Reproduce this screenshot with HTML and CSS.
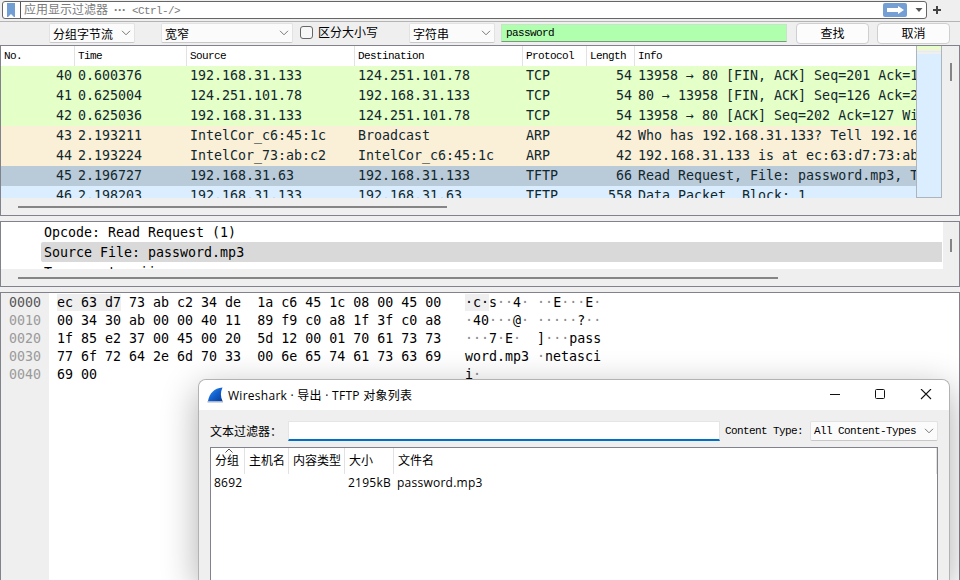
FILE: index.html
```html
<!DOCTYPE html>
<html lang="zh-CN">
<head>
    <meta charset="UTF-8">
    <title>Wireshark</title>
    <link rel="stylesheet" href="styles.css">
</head>
<body>

<div class="filter-bar">
    <div class="filter-box">
        <svg class="bookmark" width="10" height="16" viewBox="0 0 10 16"><path d="M1 1h8v14H8L5 12 2 15H1z" fill="#729fd3"/></svg>
        <div class="filter-text">应用显示过滤器<span class="dots">···</span><span class="mono">&lt;Ctrl-/&gt;</span></div>
        <svg class="apply" width="24" height="14" viewBox="0 0 24 14"><rect width="24" height="14" rx="2" fill="#739fd4"/><path d="M4 5h11V3l6 4-6 4V9H4z" fill="#fff"/></svg>
        <svg class="caret" width="8" height="4" viewBox="0 0 8 4"><path d="M0.500 0h7L4 4z" fill="#555"/></svg>
    </div>
    <svg class="plus" width="8" height="8" viewBox="0 0 8 8"><path d="M4 0v8M0 4h8" stroke="#444" stroke-width="2"/></svg>
</div>

<div class="search-bar">
    <div class="select packet-bytes"><span>分组字节流</span><svg width="10" height="6" viewBox="0 0 10 6"><path d="M1 0.800l4 4 4-4"/></svg></div>
    <div class="select charset"><span>宽窄</span><svg width="10" height="6" viewBox="0 0 10 6"><path d="M1 0.800l4 4 4-4"/></svg></div>
    <div class="checkbox"></div>
    <div class="case-label">区分大小写</div>
    <div class="select kind"><span>字符串</span><svg width="10" height="6" viewBox="0 0 10 6"><path d="M1 0.800l4 4 4-4"/></svg></div>
    <div class="search-input mono">password</div>
    <div class="button">查找</div>
    <div class="button">取消</div>
</div>

<div class="pane packet-pane">
    <div class="packets">
        <div class="packet head"><div>No.</div><div>Time</div><div>Source</div><div>Destination</div><div>Protocol</div><div>Length</div><div>Info</div></div>
        <div class="packet tcp"><div>40</div><div>0.600376</div><div>192.168.31.133</div><div>124.251.101.78</div><div>TCP</div><div>54</div><div>13958 → 80 [FIN, ACK] Seq=201 Ack=1</div></div>
        <div class="packet tcp"><div>41</div><div>0.625004</div><div>124.251.101.78</div><div>192.168.31.133</div><div>TCP</div><div>54</div><div>80 → 13958 [FIN, ACK] Seq=126 Ack=2</div></div>
        <div class="packet tcp"><div>42</div><div>0.625036</div><div>192.168.31.133</div><div>124.251.101.78</div><div>TCP</div><div>54</div><div>13958 → 80 [ACK] Seq=202 Ack=127 Wi</div></div>
        <div class="packet arp"><div>43</div><div>2.193211</div><div>IntelCor_c6:45:1c</div><div>Broadcast</div><div>ARP</div><div>42</div><div>Who has 192.168.31.133? Tell 192.16</div></div>
        <div class="packet arp"><div>44</div><div>2.193224</div><div>IntelCor_73:ab:c2</div><div>IntelCor_c6:45:1c</div><div>ARP</div><div>42</div><div>192.168.31.133 is at ec:63:d7:73:ab</div></div>
        <div class="packet selected"><div>45</div><div>2.196727</div><div>192.168.31.63</div><div>192.168.31.133</div><div>TFTP</div><div>66</div><div>Read Request, File: password.mp3, T</div></div>
        <div class="packet udp"><div>46</div><div>2.198203</div><div>192.168.31.133</div><div>192.168.31.63</div><div>TFTP</div><div>558</div><div>Data Packet, Block: 1</div></div>
    </div>
    <div class="minimap"></div>
    <div class="vscroll"><div class="thumb"></div></div>
    <div class="hscroll"><div class="thumb"></div></div>
</div>

<div class="pane detail-pane">
    <div class="details">
        <div class="detail">Opcode: Read Request (1)</div>
        <div class="detail current">Source File: password.mp3</div>
        <div class="detail">Type: netascii</div>
    </div>
    <div class="vscroll"><div class="thumb"></div></div>
    <div class="hscroll"><div class="thumb"></div></div>
</div>

<div class="pane hex-pane">
<pre class="offsets"><b>0000</b>
0010
0020
0030
0040</pre>
<pre class="bytes"><mark>ec 63 d7</mark> 73 ab c2 34 de  1a c6 45 1c 08 00 45 00
00 34 30 ab 00 00 40 11  89 f9 c0 a8 1f 3f c0 a8
1f 85 e2 37 00 45 00 20  5d 12 00 01 70 61 73 73
77 6f 72 64 2e 6d 70 33  00 6e 65 74 61 73 63 69
69 00</pre>
<pre class="ascii"><mark>·c·</mark>s<i>··</i>4<i>·</i> <i>··</i>E<i>···</i>E<i>·</i>
<i>·</i>40<i>···</i>@<i>·</i> <i>·····</i>?<i>··</i>
<i>···</i>7<i>·</i>E<i>·</i>  ]<i>···</i>pass
word.mp3 <i>·</i>netasci
i<i>·</i></pre>
</div>

<div class="dialog">
    <div class="titlebar">
        <svg class="fin" width="17" height="17" viewBox="0 0 17 17">
            <defs><linearGradient id="fin" x1="0" y1="0" x2="1" y2="1"><stop offset="0" stop-color="#3b9cf0"/><stop offset="0.500" stop-color="#1262d0"/><stop offset="1" stop-color="#073c99"/></linearGradient></defs>
            <path d="M1 14C2.500 6.500 7 1 15.500 0.500 13.300 5 13.500 9.500 15.500 14z" fill="url(#fin)"/>
            <path d="M0.500 14h15.500v1.500H0.500z" fill="#a9b5c6"/>
        </svg>
        <div class="title">Wireshark · 导出 · TFTP 对象列表</div>
        <svg class="controls" width="102" height="12" viewBox="0 0 102 12" fill="none" stroke="#111">
            <path d="M0 5.500h10"/>
            <rect x="45.500" y="0.500" width="9" height="9" rx="1"/>
            <path d="M91 0l10 10M101 0L91 10" stroke-width="1.100"/>
        </svg>
    </div>
    <div class="dialog-filter">
        <div class="text-label">文本过滤器：</div>
        <div class="text-input"></div>
        <div class="type-label mono">Content Type:</div>
        <div class="select types"><span class="mono">All Content-Types</span><svg width="10" height="6" viewBox="0 0 10 6"><path d="M1 0.800l4 4 4-4"/></svg></div>
    </div>
    <div class="objects">
        <svg class="sort" width="8" height="5" viewBox="0 0 8 5"><path d="M0.500 4.500L4 1l3.500 3.500" fill="none" stroke="#555"/></svg>
        <div class="object object-head"><div>分组</div><div>主机名</div><div>内容类型</div><div>大小</div><div>文件名</div></div>
        <div class="object"><div>8692</div><div></div><div></div><div>2195kB</div><div>password.mp3</div></div>
    </div>
</div>

</body>
</html>
```
FILE: styles.css
```css
* {
    box-sizing: border-box;
}
body {
    margin: 0;
    width: 960px;
    height: 580px;
    overflow: hidden;
    position: relative;
    display: flex;
    flex-direction: column;
    background: #efefef;
    color: #000;
    font-family: "Liberation Sans", "Noto Sans CJK SC", sans-serif;
    font-size: 12px;
}
svg {
    display: block;
    flex: none;
}
.mono {
    font-family: "Liberation Mono", monospace;
    font-size: 11px;
    letter-spacing: -0.6px;
}

/* display filter */
.filter-bar {
    height: 22px;
    flex: none;
    display: flex;
    align-items: flex-start;
    padding: 1px 0 0 2px;
    border-bottom: 1px solid #b4b4b4;
}
.filter-box {
    width: 925px;
    height: 18px;
    display: flex;
    align-items: center;
    background: #fff;
    border: 1px solid #666;
    border-radius: 3px;
}
.bookmark {
    margin-left: 3px;
}
.filter-text {
    flex: 1;
    height: 16px;
    line-height: 16px;
    margin-left: 4px;
    padding-left: 3px;
    border-left: 1px solid #555;
    color: #7b7b7b;
}
.filter-text .dots {
    display: inline-block;
    width: 12px;
    margin: 0 6px 0 6px;
    font-weight: bold;
}
.caret {
    margin: 0 3px 0 8px;
}
.plus {
    margin: 5px 0 0 6px;
}

/* search bar */
.search-bar {
    height: 23px;
    flex: none;
    display: flex;
    align-items: flex-start;
    padding: 1px 0 0 49px;
}
.select {
    height: 20px;
    display: flex;
    align-items: center;
    justify-content: space-between;
    padding: 0 3px 0 3px;
    background: #fbfbfb;
    border: 1px solid #e2e2e2;
    border-bottom-color: #c8c8c8;
    border-radius: 2px;
    white-space: nowrap;
}
.select svg {
    fill: none;
    stroke: #777;
}
.packet-bytes {
    width: 86px;
}
.charset {
    width: 132px;
    margin-left: 26px;
}
.checkbox {
    width: 13px;
    height: 13px;
    margin: 3px 5px 0 7px;
    background: #f7f7f7;
    border: 1px solid #666;
    border-radius: 3px;
}
.case-label {
    width: 91px;
    line-height: 21px;
}
.kind {
    width: 86px;
}
.search-input {
    width: 286px;
    height: 18px;
    line-height: 17px;
    margin: 1px 0 0 6px;
    padding-left: 4px;
    background: #afffaf;
    border: 1px solid #c5e6c5;
    border-bottom-color: #7d987d;
}
.button {
    width: 73px;
    height: 21px;
    line-height: 21px;
    margin-left: 8px;
    text-align: center;
    background: #fcfcfc;
    border: 1px solid #cfcfcf;
    border-radius: 4px;
}
.search-input + .button {
    margin-left: 9px;
}

/* panes */
.pane {
    flex: none;
    border: 1px solid #82828c;
    display: grid;
    overflow: hidden;
    font-family: "DejaVu Sans Mono", monospace;
    font-size: 13.3px;
}
.packet-pane {
    height: 171px;
    grid-template-columns: 915px 26px 17px;
    grid-template-rows: 153px 16px;
}
.packets {
    height: 152px;
    overflow: hidden;
}
.packet {
    display: grid;
    grid-template-columns: 74px 112px 168px 168px 64px 48px 281px;
    height: 20px;
    line-height: 20px;
    color: #12272e;
}
.packet div {
    padding-left: 3px;
    overflow: hidden;
    white-space: nowrap;
}
.packet:not(.head) div:nth-child(1),
.packet:not(.head) div:nth-child(6) {
    text-align: right;
    padding-right: 3px;
}
.packet.head {
    font-family: "Liberation Mono", monospace;
    font-size: 11px;
    letter-spacing: -0.6px;
    line-height: 21px;
    color: #000;
    background: #fff;
}
.head div:not(:last-child) {
    border-right: 1px solid #e2e2e2;
}
.tcp {
    background: #e4ffc7;
}
.arp {
    background: #faf0d7;
}
.selected {
    background: #b9cad9;
}
.udp {
    background: #daeeff;
}
.minimap {
    height: 152px;
    width: 26px;
    border: 1px solid #adb4bb;
    border-top: 0;
    background: linear-gradient(#e4ffc7 0 3px, #faf0d7 3px 5px, #daeeff 5px 6px, #efefef 6px 8px, #daeeff 8px);
}
.hscroll {
    grid-column: 1 / -1;
    background: #efefef;
    padding: 7px 0 0 17px;
}
.hscroll .thumb {
    width: 429px;
    height: 2px;
    background: #858585;
}
.vscroll {
    background: #efefef;
    padding: 17px 0 0 8px;
}
.vscroll .thumb {
    width: 2px;
    height: 18px;
    background: #858585;
}
.detail-pane {
    height: 66px;
    margin-top: 5px;
    grid-template-columns: 942px 16px;
    grid-template-rows: 48px 16px;
}
.details {
    height: 47px;
    overflow: hidden;
    background: #fff;
    padding: 0 1px 0 40px;
}
.detail {
    height: 20px;
    line-height: 20px;
    padding: 1px 0 0 3px;
}
.detail.current {
    background: #d9d9d9;
    border-radius: 2px 0 0 2px;
}
.detail-pane .hscroll .thumb {
    width: 760px;
}
.detail-pane .vscroll {
    padding-left: 7px;
}
.detail-pane .vscroll .thumb {
    height: 13px;
}
.hex-pane {
    height: 288px;
    margin-top: 5px;
    border-bottom: 0;
    grid-template-columns: 48px 408px 1fr;
    background: #fff;
}
.hex-pane pre {
    margin: 0;
    padding: 1px 0 0 8px;
    font: inherit;
    line-height: 18px;
}
.hex-pane .offsets {
    background: #efefef;
    color: #9a9a9a;
}
.offsets b {
    font-weight: normal;
    color: #555;
}
.hex-pane mark {
    display: inline-block;
    height: 17px;
    vertical-align: top;
    background: #efefef;
    color: #000;
}
.ascii i {
    font-style: normal;
    color: #8a8a8a;
}

/* export dialog */
.dialog {
    position: absolute;
    left: 198px;
    top: 379px;
    bottom: 0;
    width: 752px;
    background: #efefef;
    border: 1px solid #b2b2b2;
    border-bottom: 0;
    border-radius: 8px 8px 0 0;
    box-shadow: 0 10px 36px rgba(0, 0, 0, 0.32);
    font-family: "Open Sans", "Noto Sans CJK SC", sans-serif;
    display: flex;
    flex-direction: column;
}
.titlebar {
    height: 30px;
    flex: none;
    display: flex;
    align-items: center;
    padding-left: 8px;
    background: #fff;
    border-radius: 7px 7px 0 0;
}
.title {
    flex: 1;
    margin: -1px 0 0 4px;
    letter-spacing: 0.27px;
    white-space: nowrap;
}
.controls {
    margin-right: 17px;
}
.dialog-filter {
    flex: none;
    display: flex;
    align-items: flex-start;
    padding: 11px 0 0 11px;
    height: 37px;
    white-space: nowrap;
}
.text-label {
    width: 78px;
    line-height: 21px;
}
.text-input {
    width: 432px;
    height: 20px;
    background: #fff;
    border: 1px solid #e5e5e5;
    border-bottom: 2px solid #0070c5;
}
.type-label {
    width: 90px;
    padding-left: 5px;
    line-height: 21px;
}
.types {
    width: 128px;
}
.objects {
    position: relative;
    flex: 1;
    margin: 0 11px;
    background: #fff;
    border: 1px solid #82828c;
    border-bottom: 0;
}
.sort {
    position: absolute;
    left: 14px;
    top: 0;
}
.object {
    display: grid;
    grid-template-columns: 34px 44px 56px 49px 1fr;
    height: 19px;
    line-height: 19px;
    white-space: nowrap;
    letter-spacing: 0.25px;
}
.object div {
    padding-left: 3px;
}
.object-head {
    height: 25px;
    line-height: 26px;
    letter-spacing: 0;
}
.object-head div {
    padding-left: 4px;
    border-right: 1px solid #e2e2e2;
}
```
